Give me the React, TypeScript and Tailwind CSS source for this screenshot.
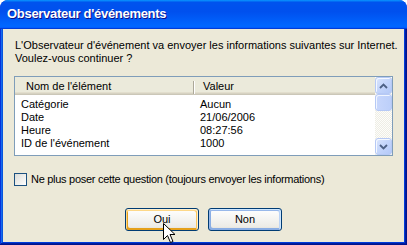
import React from 'react';

const rows = [
  { name: 'Catégorie', value: 'Aucun' },
  { name: 'Date', value: '21/06/2006' },
  { name: 'Heure', value: '08:27:56' },
  { name: "ID de l'événement", value: '1000' },
];

const ScrollButton: React.FC<{ dir: 'up' | 'down' }> = ({ dir }) => (
  <div className="h-[17px] w-[17px] rounded-[3px] border border-[#b6c9f5] bg-[linear-gradient(135deg,#dbe6fd_0%,#c5d6fb_45%,#b4c9f8_100%)] shadow-[inset_1px_1px_#f4f8ff] flex items-center justify-center">
    <svg width="9" height="6" viewBox="0 0 9 6">
      {dir === 'up' ? (
        <path d="M1 5 L4.5 1.5 L8 5" fill="none" stroke="#4d6185" strokeWidth="1.8" />
      ) : (
        <path d="M1 1 L4.5 4.5 L8 1" fill="none" stroke="#4d6185" strokeWidth="1.8" />
      )}
    </svg>
  </div>
);

export default function App() {
  return (
    <div className="w-[407px] h-[245px] relative overflow-hidden font-['Liberation_Sans',Arial,sans-serif]">
      <div className="w-full h-full flex flex-col rounded-t-[8px] overflow-hidden bg-[#0831d9]">
        {/* Title bar */}
        <div className="h-[29px] shrink-0 flex items-center pl-[7px] bg-[linear-gradient(180deg,#0997ff,#0053ee_8%,#0050ee_40%,#0066ff_88%,#0066ff_93%,#005bff_95%,#003dd7_96%,#003dd7)]">
          <span className="text-white text-[13px] font-bold tracking-[-0.3px] [text-shadow:1px_1px_#0f1089] -mt-[1px]">
            Observateur d'événements
          </span>
        </div>

        {/* Frame */}
        <div className="flex-1 flex flex-col px-[3px] pb-[3px] shadow-[inset_-1px_-1px_#00138c,inset_1px_0_#0831d9,inset_-2px_-2px_#001ea0,inset_2px_0_#166aee,inset_-3px_-3px_#003bda,inset_3px_0_#0855dd]">
          <div className="flex-1 bg-[#ece9d8] flex flex-col text-[11px] leading-[13px] text-black">
            <p className="pl-[12px] pt-[10px] pr-[4px]">
              L'Observateur d'événement va envoyer les informations suivantes sur Internet.
              <br />
              Voulez-vous continuer ?
            </p>

            {/* List view */}
            <div className="mx-[11px] mt-[11px] h-[80px] border border-[#7f9db9] bg-white flex">
              <div className="flex-1 flex flex-col">
                <div className="h-[18px] flex bg-[#ebeadb] shadow-[inset_0_-1px_#cbc7b8,inset_0_-2px_#d6d2c2,inset_0_-3px_#e2decd]">
                  <div className="w-[180px] pl-[11px] pt-[3px] relative">
                    Nom de l'élément
                    <div className="absolute right-0 top-[4px] h-[13px] w-[2px] border-l border-[#aca899] border-r border-r-white" />
                  </div>
                  <div className="flex-1 pl-[8px] pt-[3px]">Valeur</div>
                </div>
                <div className="pt-[3px]">
                  {rows.map((r) => (
                    <div key={r.name} className="h-[13px] flex">
                      <div className="w-[185px] pl-[6px]">{r.name}</div>
                      <div className="flex-1">{r.value}</div>
                    </div>
                  ))}
                </div>
              </div>

              {/* Scrollbar */}
              <div className="w-[17px] flex flex-col bg-[#f6f5ee] bg-[repeating-conic-gradient(#eeede5_0%_25%,#fdfdfa_0%_50%)] bg-[length:2px_2px]">
                <ScrollButton dir="up" />
                <div className="h-[17px] w-[17px] rounded-[3px] border border-[#b6c9f5] bg-[linear-gradient(90deg,#c8d7fc,#bccffa)] shadow-[inset_1px_1px_#f0f5ff]" />
                <div className="flex-1" />
                <ScrollButton dir="down" />
              </div>
            </div>

            {/* Checkbox */}
            <label className="flex items-center mt-[17px] ml-[11px]">
              <span className="w-[13px] h-[13px] border border-[#1c5180] bg-[linear-gradient(135deg,#dcdcd7,#ffffff)]" />
              <span className="ml-[4px] tracking-[-0.28px]">Ne plus poser cette question (toujours envoyer les informations)</span>
            </label>

            {/* Buttons */}
            <div className="flex justify-center gap-[9px] mt-[22px]">
              <button className="w-[74px] h-[23px] rounded-[3px] border border-[#003c74] bg-[linear-gradient(180deg,#ffffff,#ecebe6_86%,#d6d0c5)] shadow-[inset_-1px_1px_#fff0cf,inset_1px_2px_#fdd889,inset_-2px_2px_#fbc761,inset_2px_-2px_#e5a01a] text-[11px] text-black">
                Oui
              </button>
              <button className="w-[74px] h-[23px] rounded-[3px] border border-[#003c74] bg-[linear-gradient(180deg,#ffffff,#ecebe6_86%,#d6d0c5)] shadow-[inset_-1px_1px_#cee7ff,inset_1px_2px_#98b8ea,inset_-2px_2px_#bcd4f6,inset_1px_-1px_#89ade4,inset_2px_-2px_#89ade4] text-[11px] text-black">
                Non
              </button>
            </div>
          </div>
        </div>
      </div>

      {/* Mouse cursor */}
      <svg className="absolute left-[163px] top-[223px]" width="13" height="21" viewBox="0 0 13 21">
        <path
          d="M0.5 0.5 L0.5 16.5 L4.5 12.5 L7.5 19.5 L10 18.5 L7 11.5 L12 11.5 Z"
          fill="#ffffff"
          stroke="#000000"
          strokeWidth="1"
          strokeLinejoin="miter"
        />
      </svg>
    </div>
  );
}
